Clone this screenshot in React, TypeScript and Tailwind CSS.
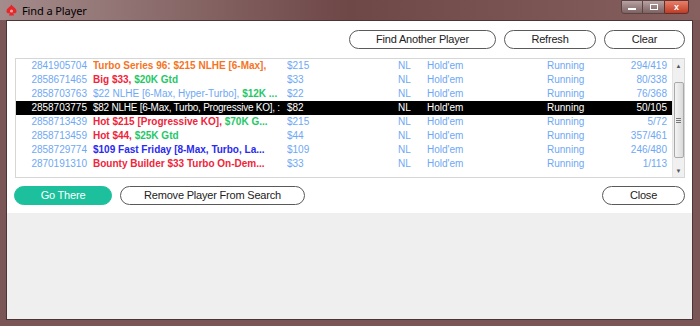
import React from 'react';

type Seg = { t: string; c: string; b?: boolean };

type Row = { id: string; name: Seg[]; buyin: string; count: string; selected?: boolean };

const BLUE = 'text-[#6ea8f4]';

const ROWS: Row[] = [
  { id: '2841905704', name: [{ t: 'Turbo Series 96: $215 NLHE [6-Max],', c: 'text-[#f57424]', b: true }], buyin: '$215', count: '294/419' },
  {
    id: '2858671465',
    name: [
      { t: 'Big $33, ', c: 'text-[#f0243a]', b: true },
      { t: '$20K Gtd', c: 'text-[#1fc866]', b: true },
    ],
    buyin: '$33',
    count: '80/338',
  },
  {
    id: '2858703763',
    name: [
      { t: '$22 NLHE [6-Max, Hyper-Turbo], ', c: BLUE },
      { t: '$12K ...', c: 'text-[#1fc866]', b: true },
    ],
    buyin: '$22',
    count: '76/368',
  },
  { id: '2858703775', name: [{ t: '$82 NLHE [6-Max, Turbo, Progressive KO], :', c: 'text-white tracking-[-0.25px]' }], buyin: '$82', count: '50/105', selected: true },
  {
    id: '2858713439',
    name: [
      { t: 'Hot $215 [Progressive KO], ', c: 'text-[#f0243a]', b: true },
      { t: '$70K G...', c: 'text-[#1fc866]', b: true },
    ],
    buyin: '$215',
    count: '5/72',
  },
  {
    id: '2858713459',
    name: [
      { t: 'Hot $44, ', c: 'text-[#f0243a]', b: true },
      { t: '$25K Gtd', c: 'text-[#1fc866]', b: true },
    ],
    buyin: '$44',
    count: '357/461',
  },
  { id: '2858729774', name: [{ t: '$109 Fast Friday [8-Max, Turbo, La...', c: 'text-[#2a2af0]', b: true }], buyin: '$109', count: '246/480' },
  { id: '2870191310', name: [{ t: 'Bounty Builder $33 Turbo On-Dem...', c: 'text-[#f0243a]', b: true }], buyin: '$33', count: '1/113' },
];

const PillButton = ({ label, w, green }: { label: string; w: string; green?: boolean }) => (
  <button
    className={`${w} h-[19px] rounded-full text-[11px] font-medium leading-none tracking-[-0.2px] ${
      green ? 'bg-[#1cc09c] text-white border border-[#1cc09c]' : 'bg-white text-[#222] border border-[#5a5a5a]'
    }`}
  >
    {label}
  </button>
);

const Spade = () => (
  <svg width="11" height="12" viewBox="0 0 11 12">
    <path d="M5.5 0.5 C7 3 10.5 4.5 10.5 7.2 C10.5 9 8.8 9.8 7.2 9 L8 11.5 L3 11.5 L3.8 9 C2.2 9.8 0.5 9 0.5 7.2 C0.5 4.5 4 3 5.5 0.5 Z" fill="#e5262b" />
    <circle cx="5.5" cy="7" r="1.6" fill="#ffd0c8" opacity="0.7" />
  </svg>
);

const ListRow = ({ r }: { r: Row }) => {
  const base = r.selected ? 'text-white' : BLUE;
  return (
    <div className={`flex h-[14px] leading-[14px] whitespace-nowrap ${r.selected ? 'bg-black' : ''}`}>
      <div className={`w-[71px] text-right ${base}`}>{r.id}</div>
      <div className="w-[6px]" />
      <div className="w-[190px] overflow-hidden">
        {r.name.map((s, i) => (
          <span key={i} className={`${s.c} ${s.b ? 'font-bold' : ''}`}>
            {s.t}
          </span>
        ))}
      </div>
      <div className="w-[4px]" />
      <div className={`w-[111px] ${base}`}>{r.buyin}</div>
      <div className={`w-[29px] ${base}`}>NL</div>
      <div className={`w-[120px] ${base}`}>Hold'em</div>
      <div className={`w-[80px] ${base}`}>Running</div>
      <div className={`w-[40px] text-right ${base}`}>{r.count}</div>
    </div>
  );
};

const Scrollbar = () => (
  <div className="w-[12px] flex flex-col items-center bg-[#f0f0f0] border-l border-[#e4e4e4]">
    <div className="h-[14px] flex items-center justify-center text-[6px] text-[#555]">▲</div>
    <div className="mt-[9px] w-[10px] h-[76px] rounded-[2px] border border-[#a9a9a9] bg-gradient-to-r from-[#f4f4f4] to-[#dadada] flex flex-col items-center justify-center gap-[1px]">
      <div className="w-[5px] h-px bg-[#777]" />
      <div className="w-[5px] h-px bg-[#777]" />
      <div className="w-[5px] h-px bg-[#777]" />
    </div>
    <div className="flex-1" />
    <div className="h-[12px] flex items-center justify-center text-[6px] text-[#555]">▼</div>
  </div>
);

export default function App() {
  return (
    <div
      className="w-[700px] h-[326px] flex flex-col bg-[#7a5656] overflow-hidden"
      style={{ fontFamily: '"Liberation Sans", Arial, sans-serif' }}
    >
      {/* title bar */}
      <div className="h-[20px] flex items-start bg-gradient-to-r from-[#a48c8c] via-[#6e4747] to-[#86605f]">
        <div className="pl-[6px] pt-[4px] flex items-center gap-[5px]">
          <Spade />
          <span className="text-[11px] text-black leading-none tracking-[-0.1px]" style={{ fontFamily: '"Noto Sans", sans-serif' }}>
            Find a Player
          </span>
        </div>
        <div className="flex-1" />
        <div className="flex mr-[11px] h-[14px]">
          <div className="w-[22px] border border-[#5b4343] rounded-bl-[3px] bg-gradient-to-b from-[#b8a2a2] to-[#7e6262] flex items-center justify-center">
            <div className="w-[8px] h-[2px] bg-white mt-[4px]" />
          </div>
          <div className="w-[21px] border-y border-[#5b4343] bg-gradient-to-b from-[#b8a2a2] to-[#7e6262] flex items-center justify-center">
            <div className="w-[8px] h-[6px] border border-white" />
          </div>
          <div className="w-[25px] border border-[#5b3030] rounded-br-[3px] bg-gradient-to-b from-[#e6806a] to-[#c23a22] flex items-center justify-center text-white text-[9px] font-bold leading-none">
            x
          </div>
        </div>
      </div>

      {/* client area */}
      <div className="flex-1 ml-[6px] mr-[7px] mb-[6px] border border-[#4d3434] flex flex-col">
        <div className="bg-white flex flex-col pt-[9px] pb-[8px]">
          <div className="flex justify-end gap-[8px] pr-[7px]">
            <PillButton label="Find Another Player" w="w-[147px]" />
            <PillButton label="Refresh" w="w-[92px]" />
            <PillButton label="Clear" w="w-[81px]" />
          </div>

          <div className="ml-[8px] mr-[7px] mt-[9px] h-[120px] border border-[#d6d6d6] flex text-[10px]">
            <div className="flex-1 flex flex-col">
              {ROWS.map((r) => (
                <ListRow key={r.id} r={r} />
              ))}
            </div>
            <Scrollbar />
          </div>

          <div className="flex items-center mt-[8px] pl-[7px] pr-[7px]">
            <PillButton label="Go There" w="w-[98px]" green />
            <div className="w-[8px]" />
            <PillButton label="Remove Player From Search" w="w-[185px]" />
            <div className="flex-1" />
            <PillButton label="Close" w="w-[83px]" />
          </div>
        </div>
        <div className="flex-1 bg-[#efefef]" />
      </div>
    </div>
  );
}
